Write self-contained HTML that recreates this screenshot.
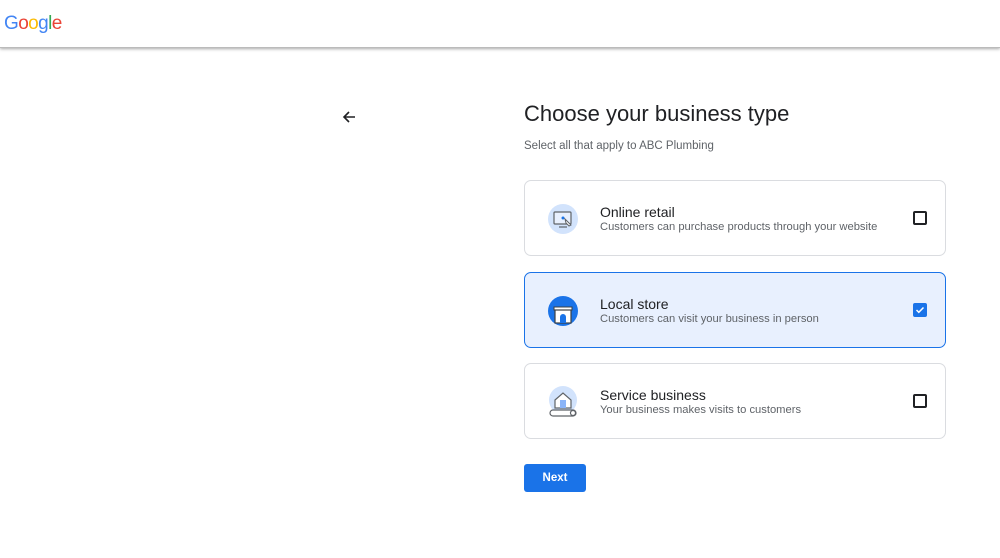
<!DOCTYPE html>
<html><head><meta charset="utf-8"><style>
*{box-sizing:border-box;margin:0;padding:0}
body{width:1000px;height:558px;background:#fff;font-family:"Liberation Sans",Arial,sans-serif;position:relative;overflow:hidden}
.hdr{position:absolute;left:0;top:0;width:1000px;height:48px;background:#fff;box-shadow:0 1px 3px rgba(0,0,0,.35);border-bottom:1px solid #bbb}
.logo{position:absolute;left:4px;top:13px;font-size:19px;letter-spacing:-0.6px}
.arrow{position:absolute;left:341px;top:109px}
h1{position:absolute;left:524px;top:101px;font-size:22px;font-weight:normal;color:#202124}
.sub{position:absolute;left:524px;top:140px;font-size:11.5px;color:#5f6368}
.card{position:absolute;left:524px;width:422px;height:76px;border:1px solid #dadce0;border-radius:7px;background:#fff}
.card.sel{background:#e8f0fe;border:1.5px solid #1a73e8}
.card .t{position:absolute;left:75px;top:23px;font-size:14px;color:#202124}
.card .d{position:absolute;left:75px;top:40px;font-size:11.2px;color:#5f6368}
.card .ic{position:absolute;left:22px;top:22px}
.cb{position:absolute;left:388px;top:30px;width:14px;height:14px;border:2px solid #202124;border-radius:2px}
.cb.on{background:#1a73e8;border-color:#1a73e8}
.btn{position:absolute;left:524px;top:464px;width:62px;height:28px;background:#1a73e8;color:#fff;border-radius:3px;font-size:11.5px;font-weight:bold;text-align:center;line-height:28px}
</style></head><body>
<div class="hdr"><div class="logo"><span style="color:#4285f4">G</span><span style="color:#ea4335">o</span><span style="color:#fbbc05">o</span><span style="color:#4285f4">g</span><span style="color:#34a853">l</span><span style="color:#ea4335">e</span></div></div>
<svg class="arrow" width="16" height="16" viewBox="0 0 16 16"><path d="M14 8H3M8 3L3 8l5 5" stroke="#202124" stroke-width="1.6" fill="none"/></svg>
<h1>Choose your business type</h1>
<div class="sub">Select all that apply to ABC Plumbing</div>

<div class="card" style="top:180px">
<svg class="ic" width="32" height="32" viewBox="0 0 32 32"><circle cx="16" cy="16" r="15" fill="#d2e3fc"/><rect x="7" y="9" width="17" height="12" rx="1" fill="#e8f0fe" stroke="#5f6368" stroke-width="1.2"/><path d="M12 24h8" stroke="#5f6368" stroke-width="1.2"/><circle cx="16" cy="15" r="1.5" fill="#1a73e8"/><path d="M18 16l6 6-2 1-3-3z" fill="#fff" stroke="#5f6368" stroke-width="1"/></svg>
<div class="t">Online retail</div><div class="d">Customers can purchase products through your website</div><div class="cb"></div></div>

<div class="card sel" style="top:272px">
<svg class="ic" width="32" height="32" viewBox="0 0 32 32"><circle cx="16" cy="16" r="15" fill="#1a73e8"/><path d="M7 12h18v3H7z" fill="#fff" stroke="#3c4043" stroke-width="1"/><rect x="8" y="15" width="16" height="13" fill="#fff" stroke="#3c4043" stroke-width="1.2"/><path d="M13 28v-6a3 3 0 0 1 6 0v6z" fill="#1a73e8"/></svg>
<div class="t">Local store</div><div class="d">Customers can visit your business in person</div>
<div class="cb on"><svg width="10" height="10" viewBox="0 0 10 10" style="position:absolute;left:0;top:0"><path d="M1.5 5l2.3 2.3L8.5 2.5" stroke="#fff" stroke-width="1.5" fill="none"/></svg></div></div>

<div class="card" style="top:363px">
<svg class="ic" width="32" height="36" viewBox="0 0 32 36"><circle cx="16" cy="14" r="14" fill="#d2e3fc"/><path d="M8 14l8-7 8 7v8H8z" fill="#fff" stroke="#5f6368" stroke-width="1.2"/><rect x="13" y="14" width="6" height="8" fill="#8ab4f8"/><rect x="3" y="24" width="26" height="6" rx="3" fill="#fff" stroke="#5f6368" stroke-width="1.2"/><circle cx="26" cy="27" r="2.5" fill="#fff" stroke="#5f6368" stroke-width="1.2"/></svg>
<div class="t">Service business</div><div class="d">Your business makes visits to customers</div><div class="cb"></div></div>

<div class="btn">Next</div>
</body></html>
